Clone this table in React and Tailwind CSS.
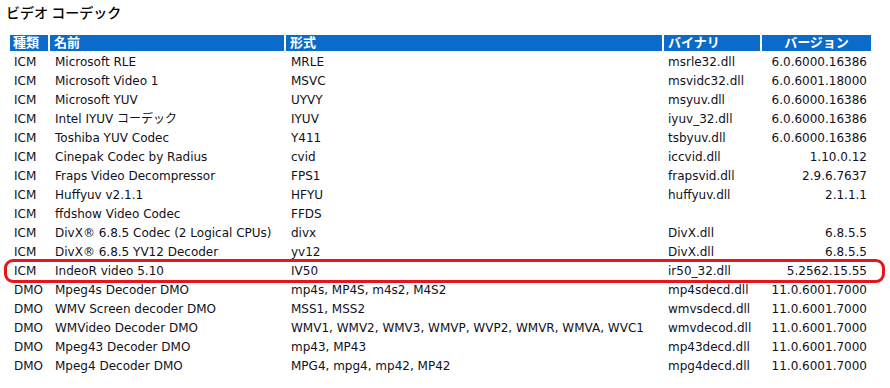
import React from "react";

const rows = [
  ["ICM", "Microsoft RLE", "MRLE", "msrle32.dll", "6.0.6000.16386"],
  ["ICM", "Microsoft Video 1", "MSVC", "msvidc32.dll", "6.0.6001.18000"],
  ["ICM", "Microsoft YUV", "UYVY", "msyuv.dll", "6.0.6000.16386"],
  ["ICM", "Intel IYUV コーデック", "IYUV", "iyuv_32.dll", "6.0.6000.16386"],
  ["ICM", "Toshiba YUV Codec", "Y411", "tsbyuv.dll", "6.0.6000.16386"],
  ["ICM", "Cinepak Codec by Radius", "cvid", "iccvid.dll", "1.10.0.12"],
  ["ICM", "Fraps Video Decompressor", "FPS1", "frapsvid.dll", "2.9.6.7637"],
  ["ICM", "Huffyuv v2.1.1", "HFYU", "huffyuv.dll", "2.1.1.1"],
  ["ICM", "ffdshow Video Codec", "FFDS", "", ""],
  ["ICM", "DivX® 6.8.5 Codec (2 Logical CPUs)", "divx", "DivX.dll", "6.8.5.5"],
  ["ICM", "DivX® 6.8.5 YV12 Decoder", "yv12", "DivX.dll", "6.8.5.5"],
  ["ICM", "IndeoR video 5.10", "IV50", "ir50_32.dll", "5.2562.15.55"],
  ["DMO", "Mpeg4s Decoder DMO", "mp4s, MP4S, m4s2, M4S2", "mp4sdecd.dll", "11.0.6001.7000"],
  ["DMO", "WMV Screen decoder DMO", "MSS1, MSS2", "wmvsdecd.dll", "11.0.6001.7000"],
  ["DMO", "WMVideo Decoder DMO", "WMV1, WMV2, WMV3, WMVP, WVP2, WMVR, WMVA, WVC1", "wmvdecod.dll", "11.0.6001.7000"],
  ["DMO", "Mpeg43 Decoder DMO", "mp43, MP43", "mp43decd.dll", "11.0.6001.7000"],
  ["DMO", "Mpeg4 Decoder DMO", "MPG4, mpg4, mp42, MP42", "mpg4decd.dll", "11.0.6001.7000"],
];

const font = "font-['DejaVu_Sans','Noto_Sans_CJK_JP',sans-serif]";
const th = "bg-[#0b6bca] p-0 font-bold border-b-[2px] border-white";

export default function App() {
  return (
    <div className={`relative w-[890px] h-[388px] bg-white ${font}`}>
      <div className="pl-[6px] pt-[2px] h-[35px] text-[14px] leading-[20px] font-medium text-black font-['Noto_Sans_CJK_JP','DejaVu_Sans',sans-serif]">
        ビデオ コーデック
      </div>
      <table className="ml-[8px] border-separate border-spacing-x-[2px] border-spacing-y-0 text-[12px] text-[#111122]">
        <colgroup>
          <col className="w-[38px]" />
          <col className="w-[234px]" />
          <col className="w-[376px]" />
          <col className="w-[96px]" />
          <col className="w-[109px]" />
        </colgroup>
        <thead>
          <tr className="h-[18px] text-white text-[13px] leading-[16px]">
            <th className={`${th} text-left pl-[3px]`}>種類</th>
            <th className={`${th} text-left pl-[4px]`}>名前</th>
            <th className={`${th} text-left pl-[4px]`}>形式</th>
            <th className={`${th} text-left pl-[4px]`}>バイナリ</th>
            <th className={`${th} text-center`}>バージョン</th>
          </tr>
        </thead>
        <tbody>
          {rows.map((r, i) => (
            <tr key={i} className="h-[19px] leading-[19px]">
              <td className="pl-[4px] p-0 whitespace-nowrap">{r[0]}</td>
              <td className="pl-[5px] p-0 whitespace-nowrap">{r[1]}</td>
              <td className="pl-[5px] p-0 whitespace-nowrap">{r[2]}</td>
              <td className="pl-[4px] p-0 whitespace-nowrap">{r[3]}</td>
              <td className="pr-[4px] p-0 text-right whitespace-nowrap">{r[4]}</td>
            </tr>
          ))}
        </tbody>
      </table>
      <div className="absolute left-[4px] top-[259px] w-[881px] h-[24px] border-[3px] border-[#e8141c] rounded-[9px] pointer-events-none" />
    </div>
  );
}
